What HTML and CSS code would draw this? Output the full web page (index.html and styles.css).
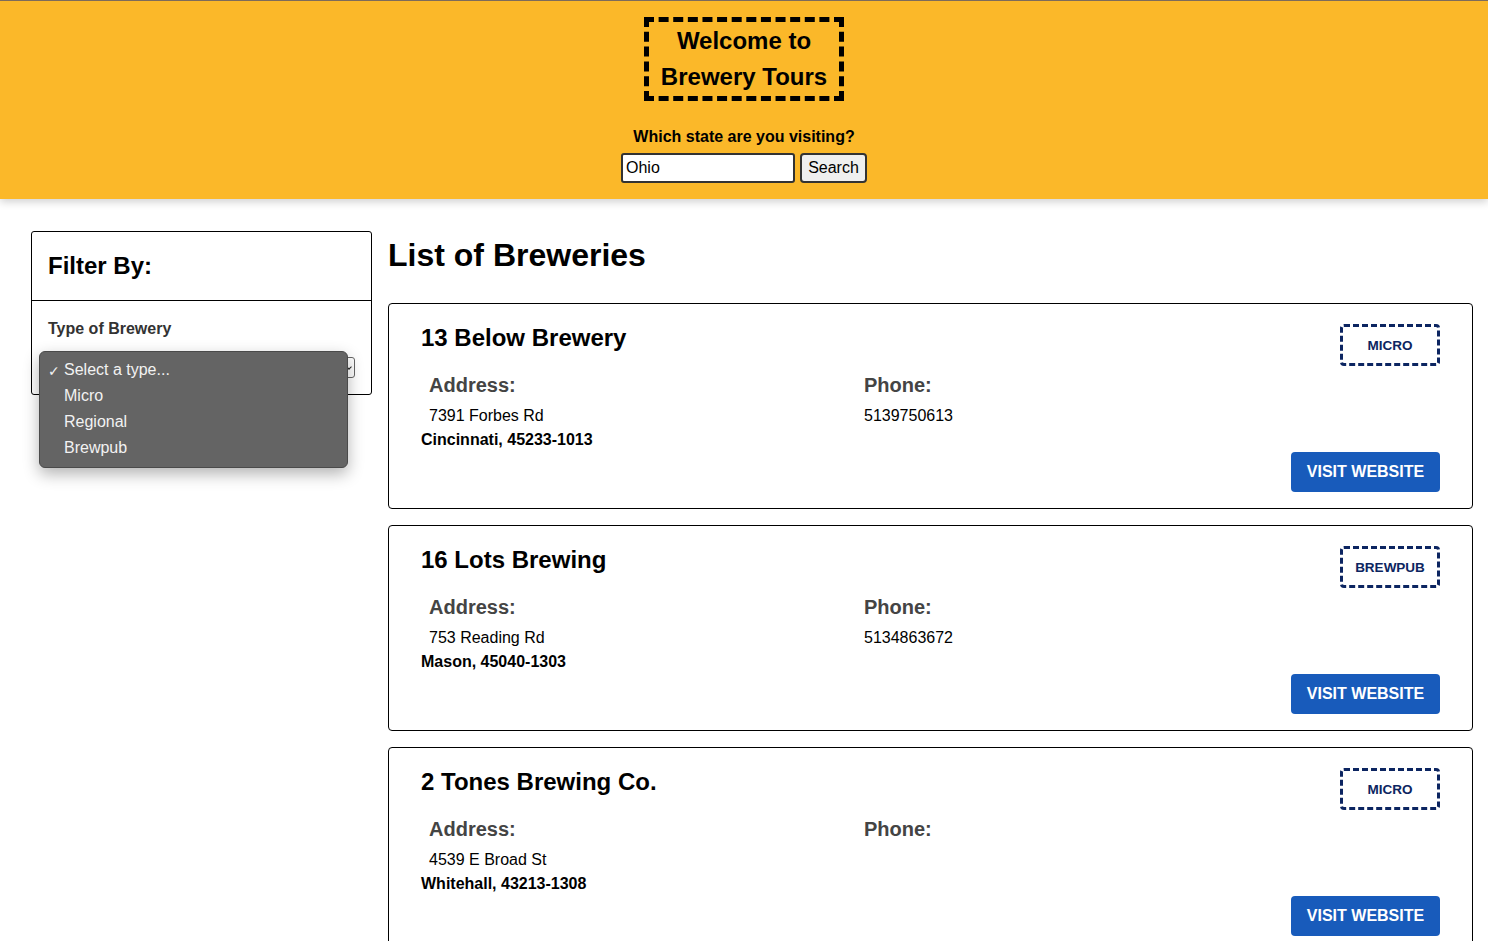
FILE: index.html
```html
<!DOCTYPE html>
<html>
<head>
<meta charset="utf-8">
<link rel="stylesheet" href="styles.css">
</head>
<body>
<header class="banner">
  <h1 class="title">Welcome to Brewery Tours</h1>
  <form class="search">
    <label class="search-label" for="state">Which state are you visiting?</label>
    <div class="search-row">
      <input id="state" class="search-input" type="text" value="Ohio">
      <button type="button" class="search-btn">Search</button>
    </div>
  </form>
</header>
<div class="page">
  <aside class="filters">
    <div class="filters-head"><h2>Filter By:</h2></div>
    <div class="filters-body">
      <div class="filter-label">Type of Brewery</div>
      <div class="fake-select"><span class="arrow"></span></div>
      <ul class="dropdown">
        <li><span class="check">✓</span>Select a type...</li>
        <li>Micro</li>
        <li>Regional</li>
        <li>Brewpub</li>
      </ul>
    </div>
  </aside>
  <main class="list">
    <h1 class="list-title">List of Breweries</h1>
    <article class="card">
      <div class="card-top">
        <h2 class="name">13 Below Brewery</h2>
        <div class="badge">MICRO</div>
      </div>
      <div class="card-info">
        <section class="addr">
          <h3>Address:</h3>
          <p class="street">7391 Forbes Rd</p>
          <p class="city">Cincinnati, 45233-1013</p>
        </section>
        <section class="phone">
          <h3>Phone:</h3>
          <p class="street">5139750613</p>
        </section>
      </div>
      <div class="card-foot"><a class="visit">VISIT WEBSITE</a></div>
    </article>
    <article class="card">
      <div class="card-top">
        <h2 class="name">16 Lots Brewing</h2>
        <div class="badge">BREWPUB</div>
      </div>
      <div class="card-info">
        <section class="addr">
          <h3>Address:</h3>
          <p class="street">753 Reading Rd</p>
          <p class="city">Mason, 45040-1303</p>
        </section>
        <section class="phone">
          <h3>Phone:</h3>
          <p class="street">5134863672</p>
        </section>
      </div>
      <div class="card-foot"><a class="visit">VISIT WEBSITE</a></div>
    </article>
    <article class="card">
      <div class="card-top">
        <h2 class="name">2 Tones Brewing Co.</h2>
        <div class="badge">MICRO</div>
      </div>
      <div class="card-info">
        <section class="addr">
          <h3>Address:</h3>
          <p class="street">4539 E Broad St</p>
          <p class="city">Whitehall, 43213-1308</p>
        </section>
        <section class="phone">
          <h3>Phone:</h3>
          <p class="street"></p>
        </section>
      </div>
      <div class="card-foot"><a class="visit">VISIT WEBSITE</a></div>
    </article>
  </main>
</div>
</body>
</html>
```
FILE: styles.css
```css
* { box-sizing: border-box; }
html, body { margin: 0; padding: 0; }
body {
  font-family: "Liberation Sans", Arial, sans-serif;
  color: #000;
  background: #fff;
}
.banner {
  background: #fbb829;
  border-top: 1px solid #7d6b5b;
  height: 199px;
  display: flex;
  flex-direction: column;
  align-items: center;
  padding-top: 16px;
  box-shadow: 0 3px 8px rgba(0,0,0,0.18);
  position: relative;
  z-index: 1;
}
.title {
  margin: 0;
  width: 200px;
  height: 84px;
  border: 5px dashed #000;
  font-size: 24px;
  line-height: 36px;
  text-align: center;
  padding: 1px 8px 0;
  font-weight: bold;
}
.search {
  margin-top: 26px;
  display: flex;
  flex-direction: column;
  align-items: center;
}
.search-label {
  font-weight: bold;
  font-size: 16px;
  line-height: 19px;
}
.search-row {
  display: flex;
  gap: 5px;
  margin-top: 7px;
}
.search-input {
  width: 174px;
  height: 30px;
  border: 2px solid #333;
  border-radius: 3px;
  font-family: "Liberation Sans", Arial, sans-serif;
  font-size: 16px;
  padding: 0 3px;
  background: #fff;
  color: #000;
}
.search-btn {
  width: 67px;
  height: 30px;
  border: 2px solid #333;
  border-radius: 4px;
  background: #efefef;
  font-family: "Liberation Sans", Arial, sans-serif;
  font-size: 16px;
  color: #000;
  padding: 0;
}
.page {
  display: flex;
  align-items: flex-start;
  gap: 16px;
  padding: 32px 15px 0 31px;
}
.filters {
  width: 341px;
  flex: none;
  border: 1px solid #000;
  border-radius: 3px;
  position: relative;
}
.filters-head {
  border-bottom: 1px solid #000;
  padding: 20px 16px 20px;
}
.filters-head h2 {
  margin: 0;
  font-size: 24px;
  line-height: 28px;
}
.filters-body {
  padding: 18px 16px 16px;
  position: relative;
}
.filter-label {
  font-weight: bold;
  font-size: 16px;
  line-height: 19px;
  color: #333;
}
.fake-select {
  margin-top: 19px;
  width: 307px;
  height: 21px;
  border: 1px solid #666;
  border-radius: 3px;
  position: relative;
  background: #fff;
}
.arrow {
  position: absolute;
  right: 3px;
  top: 7px;
  width: 4px;
  height: 4px;
  border-right: 1.5px solid #222;
  border-bottom: 1.5px solid #222;
  transform: rotate(45deg);
}
.dropdown {
  position: absolute;
  left: 7px;
  top: 50px;
  width: 309px;
  margin: 0;
  padding: 5px 0 6px;
  list-style: none;
  background: #646464;
  border: 1px solid #4a4a4a;
  border-radius: 6px;
  box-shadow: 0 6px 16px rgba(0,0,0,0.3);
  z-index: 5;
}
.dropdown li {
  color: #f2f2f2;
  font-size: 16px;
  line-height: 26px;
  padding-left: 24px;
  position: relative;
}
.check {
  position: absolute;
  left: 8px;
  top: 1px;
  font-size: 14px;
  font-family: "DejaVu Sans", sans-serif;
}
.list {
  flex: 1;
  min-width: 0;
}
.list-title {
  margin: 5px 0 29px;
  font-size: 32px;
  line-height: 38px;
}
.card {
  border: 1px solid #000;
  border-radius: 4px;
  padding: 20px 32px 16px;
  margin-bottom: 16px;
  height: 206px;
}
.card-top {
  display: flex;
  justify-content: space-between;
  align-items: flex-start;
}
.name {
  margin: 0;
  font-size: 24px;
  line-height: 28px;
}
.badge {
  width: 100px;
  height: 42px;
  border: 3px dashed #0c2561;
  border-radius: 4px;
  color: #0c2561;
  font-weight: bold;
  font-size: 13.5px;
  display: flex;
  align-items: center;
  justify-content: center;
}
.card-info {
  display: flex;
  margin-top: 7px;
}
.addr { width: 435px; }
.phone { flex: 1; }
.card-info h3 {
  margin: 0;
  padding-left: 8px;
  font-size: 20px;
  line-height: 24px;
  color: #444;
}
.card-info p { margin: 0; font-size: 16px; line-height: 19px; }
.street { padding-left: 8px; margin-top: 9px !important; }
.city { font-weight: bold; margin-top: 5px !important; }
.card-foot {
  display: flex;
  justify-content: flex-end;
  margin-top: 3px;
}
.visit {
  width: 149px;
  height: 40px;
  background: #185bbb;
  color: #fff;
  font-weight: bold;
  font-size: 16px;
  border-radius: 4px;
  display: flex;
  align-items: center;
  justify-content: center;
}
```
